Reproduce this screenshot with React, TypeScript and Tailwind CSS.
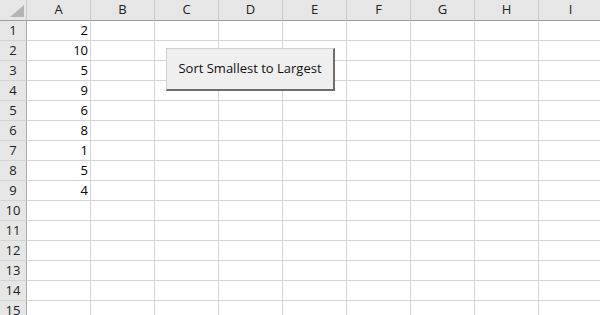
const columns = ["A", "B", "C", "D", "E", "F", "G", "H", "I"]
const values: (number | null)[] = [2, 10, 5, 9, 6, 8, 1, 5, 4]
const rowCount = 15

export default function App() {
  return (
    <div className="relative h-[315px] w-[600px] overflow-hidden bg-white font-['Open_Sans',sans-serif] text-[13px] text-black">
      <HeaderRow />
      {Array.from({ length: rowCount }, (_, i) => (
        <div key={i} className="flex h-[20px]">
          <div className="flex w-[27px] shrink-0 items-center justify-center border-r border-b border-r-[#ababab] border-b-[#d4d4d4] bg-[#e6e6e6] text-[#222]">
            {i + 1}
          </div>
          {columns.map((col, c) => (
            <div
              key={col}
              className="flex w-[64px] shrink-0 items-center justify-end border-r border-b border-[#d4d4d4] pr-[2px]"
            >
              {c === 0 && values[i] != null ? values[i] : ""}
            </div>
          ))}
        </div>
      ))}

      <button className="absolute top-[48px] left-[166px] flex h-[43px] w-[169px] items-center justify-center border border-r-2 border-b-2 border-t-[#d0d0d0] border-l-[#d0d0d0] border-r-[#6e6e6e] border-b-[#6e6e6e] bg-[#efefef] text-[13px] text-[#111]">
        Sort Smallest to Largest
      </button>
    </div>
  )
}

function HeaderRow() {
  return (
    <div className="flex h-[21px]">
      <div className="relative w-[27px] shrink-0 border-r border-b border-r-[#c6c6c6] border-b-[#9e9e9e] bg-[#e6e6e6]">
        <svg className="absolute top-[5px] left-[10px]" width="14" height="12" viewBox="0 0 14 12">
          <polygon points="14,0 14,12 0,12" fill="#b4b4b4" />
        </svg>
      </div>
      {columns.map((col) => (
        <div
          key={col}
          className="flex w-[64px] shrink-0 items-center justify-center border-r border-b border-r-[#c6c6c6] border-b-[#9e9e9e] bg-[#e6e6e6] text-[#222]"
        >
          {col}
        </div>
      ))}
    </div>
  )
}
